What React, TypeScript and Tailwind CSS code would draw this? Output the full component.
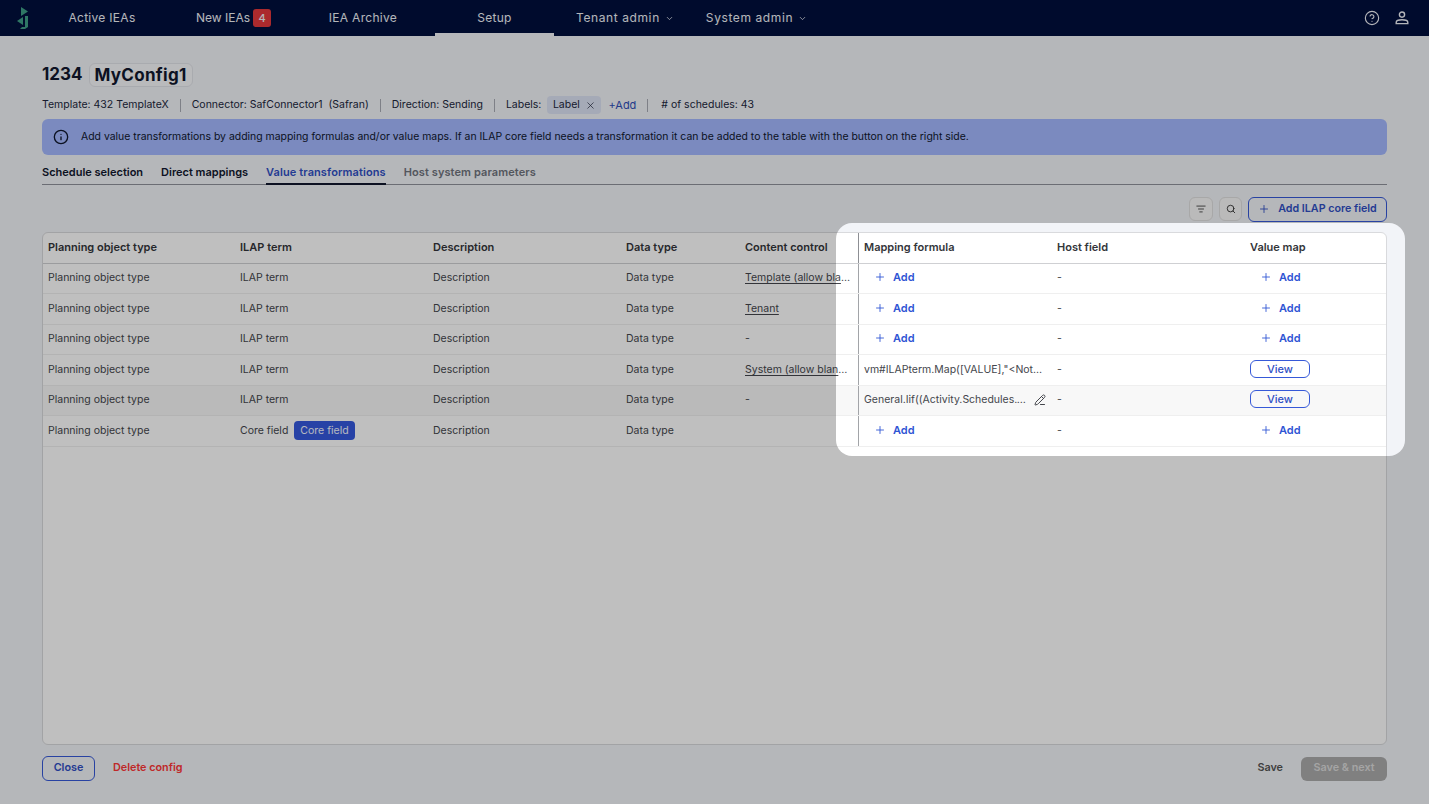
import { ChevronDown, CircleHelp, Info, ListFilter, PencilLine, Plus, Search, X } from "lucide-react"

const font = "font-['Inter','Liberation_Sans',sans-serif]"
const cols = "grid grid-cols-[192px_193px_193px_119px_118px_194px_193px_142px]"
const headCell = "mb-[2px] pl-[5px]"

type Row = {
  term?: string
  control?: string
  formula?: string
  edit?: boolean
  view?: boolean
  hover?: boolean
}

const rows: Row[] = [
  { control: "Template (allow blank)" },
  { control: "Tenant" },
  { control: "-" },
  { control: "System (allow blank values)", formula: 'vm#ILAPterm.Map([VALUE],"<NotMapped>")', view: true },
  { control: "-", formula: "General.Iif((Activity.Schedules.Count > 0),1,0)", edit: true, view: true, hover: true },
  { term: "Core field", control: "" },
]

const AddButton = () => (
  <button className="mb-[2px] flex items-center gap-[7px] pl-[10px] text-[11px] font-semibold text-[#2f55d4]">
    <Plus size={12} strokeWidth={1.75} />
    Add
  </button>
)

const Logo = () => (
  <svg width="14" height="22" viewBox="0 0 14 22" fill="#3f9f87">
    <path d="M4 0l7 4.5L4 9z" />
    <path d="M0 14l6-4v8z" />
    <path d="M8 9h3v11l-3 2H3l2-2h3z" />
  </svg>
)

const UserIcon = () => (
  <svg width="14" height="14" viewBox="0 0 14 14" fill="none" stroke="currentColor" strokeWidth="1.4">
    <circle cx="7" cy="3.6" r="2.6" />
    <path d="M1.2 12.6v-1.2c0-1.6 2-2.6 5.8-2.6s5.8 1 5.8 2.6v1.2z" />
  </svg>
)

const Divider = () => <span className="mx-[11px] h-[13px] w-px bg-[#a8abb5]" />

const NavItem = ({ label, className = "" }: { label: string; className?: string }) => (
  <a className={`flex items-center justify-center text-[12px] tracking-[0.3px] text-[#f1f3f8] ${className}`}>{label}</a>
)

const App = () => {
  return (
    <div className={`relative flex h-[804px] w-[1429px] flex-col overflow-hidden bg-[#f2f4f8] text-[#10172e] ${font}`}>
      <nav className="flex h-[36px] shrink-0 items-stretch bg-[#000f3d] pr-[20px]">
        <div className="flex w-[47px] items-center justify-center pl-[1px]">
          <Logo />
        </div>
        <NavItem label="Active IEAs" className="w-[110px]" />
        <div className="ml-[17px] flex w-[124px] items-center gap-[3px] text-[12px] text-[#f1f3f8]">
          <span className="ml-[22px]">New IEAs</span>
          <span className="flex h-[18px] w-[18px] items-center justify-center rounded-[3px] bg-[#e5393d] text-[11px] font-medium">4</span>
        </div>
        <NavItem label="IEA Archive" className="w-[130px]" />
        <NavItem label="Setup" className="ml-[7px] w-[119px] border-b-[3px] border-[#f2f4f8] pt-[3px]" />
        <div className="ml-[22px] flex items-center gap-[5px] text-[12px] tracking-[0.6px] text-[#f1f3f8]">
          Tenant admin <ChevronDown size={9} />
        </div>
        <div className="ml-[32px] flex items-center gap-[5px] text-[12px] tracking-[0.6px] text-[#f1f3f8]">
          System admin <ChevronDown size={9} />
        </div>
        <div className="ml-auto flex items-center gap-[15px] text-[#f1f3f8]">
          <CircleHelp size={16} strokeWidth={1.7} />
          <UserIcon />
        </div>
      </nav>

      <main className="flex min-h-0 flex-1 flex-col px-[42px] pb-[23px]">
        <div className="mt-[27px] flex h-[23px] items-center gap-[6px] text-[17px] font-bold">
          <span>1234</span>
          <span className="rounded-[6px] border border-[#e2e4ea] bg-[#f7f8fb] px-[5px] leading-[22px] tracking-[0.3px]">MyConfig1</span>
        </div>

        <div className="mt-[9px] flex h-[20px] items-center text-[10.5px] text-[#20263c]">
          <span>Template: 432 TemplateX</span>
          <Divider />
          <span>Connector: SafConnector1&nbsp; (Safran)</span>
          <Divider />
          <span>Direction: Sending</span>
          <Divider />
          <span>Labels:</span>
          <span className="ml-[6px] flex h-[18px] w-[54px] items-center justify-center gap-[5px] rounded-[4px] bg-[#dde3f4]">
            Label <X size={11} strokeWidth={1.5} />
          </span>
          <span className="ml-[7px] text-[11px] text-[#2f4fb8]">+Add</span>
          <Divider />
          <span className="ml-[2px]">
            # of schedules: 43
          </span>
        </div>

        <div className="mt-[4px] flex h-[36px] items-center gap-[12px] rounded-[6px] bg-[#a4b9ff] pl-[11px] text-[10.45px] text-[#10172e]">
          <Info size={16} strokeWidth={2} />
          Add value transformations by adding mapping formulas and/or value maps. If an ILAP core field needs a transformation it can be added to the table with the button on the right side.
        </div>

        <div className="mt-[9px] flex h-[21px] gap-[18px] border-b border-[#8f929b] text-[11px] font-semibold">
          <span className="h-[21px]">Schedule selection</span>
          <span className="h-[21px]">Direct mappings</span>
          <span className="h-[21px] border-b-2 border-[#10172e] tracking-[0.1px] text-[#2f4fc4]">Value transformations</span>
          <span className="h-[21px] tracking-[0.1px] text-[#6f737d]">Host system parameters</span>
        </div>

        <div className="mt-[11px] flex h-[26px] items-center justify-end gap-[6px]">
          <button className="flex h-[24px] w-[24px] items-center justify-center rounded-[6px] border border-[#e0e0e0] bg-[#f8f8f8] text-[#333]">
            <ListFilter size={10} strokeWidth={2} />
          </button>
          <button className="flex h-[24px] w-[23px] items-center justify-center rounded-[6px] border border-[#e0e0e0] bg-[#f8f8f8] text-[#333]">
            <Search size={10} strokeWidth={2.2} />
          </button>
          <button className="flex h-[25px] w-[139px] items-center justify-center gap-[8px] rounded-[6px] border border-[#3659d8] text-[10.7px] font-semibold text-[#2f4fc4]">
            <Plus size={12} strokeWidth={1.75} />
            Add ILAP core field
          </button>
        </div>

        <div className="mt-[10px] flex min-h-0 flex-1 flex-col rounded-[6px] border border-[#d9dadd] bg-white">
          <div className={`${cols} h-[30.5px] items-center border-b border-[#cfd0d3] text-[11px] font-semibold text-[#33353a]`}>
            <span className={headCell}>Planning object type</span>
            <span className={headCell}>ILAP term</span>
            <span className={headCell}>Description</span>
            <span className={headCell}>Data type</span>
            <span className={headCell}>Content control</span>
            <span className="flex h-full items-center border-l border-[#8d8f94] pb-[2px] pl-[5px]">Mapping formula</span>
            <span className={headCell}>Host field</span>
            <span className={headCell}>Value map</span>
          </div>
          {rows.map((row, i) => (
            <div
              key={i}
              className={`${cols} h-[30.5px] items-center border-b border-[#efefef] text-[10.5px] text-[#44464c] ${row.hover ? "bg-[#f8f8f8]" : ""}`}
            >
              <span className="pl-[5px]">Planning object type</span>
              <span className="flex items-center gap-[6px] pl-[5px]">
                {row.term ?? "ILAP term"}
                {row.term && <span className="rounded-[4px] bg-[#3459de] px-[6px] py-[1.5px] text-[#f2f4ff]">Core field</span>}
              </span>
              <span className="pl-[5px]">Description</span>
              <span className="pl-[5px]">Data type</span>
              <span className="truncate px-[5px]">
                {row.control && row.control !== "-" ? <span className="underline underline-offset-2">{row.control}</span> : row.control}
              </span>
              <div className="flex h-full min-w-0 items-center border-l border-[#a2a4a8] pl-[5px] pr-[6px]">
                {row.formula ? (
                  <>
                    <span className={`min-w-0 flex-1 truncate ${row.edit ? "pr-[7px]" : "pr-[2px]"}`}>{row.formula}</span>
                    {row.edit && <PencilLine size={12} className="shrink-0" />}
                  </>
                ) : (
                  <AddButton />
                )}
              </div>
              <span className="pl-[5px]">-</span>
              <div className="pl-[5px]">
                {row.view ? (
                  <button className="mb-[2px] block h-[18px] w-[60px] rounded-[6px] border border-[#3659d8] text-[11px] font-medium text-[#2f4fc4]">View</button>
                ) : (
                  <AddButton />
                )}
              </div>
            </div>
          ))}
        </div>

        <div className="mt-[11px] flex h-[25px] items-center text-[10.8px] font-semibold">
          <button className="h-[25px] w-[53px] rounded-[6px] border border-[#3659d8] text-[#2f4fc4]">Close</button>
          <span className="ml-[18px] text-[#ff3636]">Delete config</span>
          <span className="ml-auto text-[#555]">Save</span>
          <button className="ml-[18px] h-[24px] w-[86px] rounded-[6px] bg-[#ababab] text-[#dcdcdc]">Save &amp; next</button>
        </div>
      </main>

      <div className="pointer-events-none absolute left-[836px] top-[223px] h-[233px] w-[569px] rounded-[16px] shadow-[0_0_0_2000px_rgba(0,0,0,0.25)]" />
    </div>
  )
}

export default App
